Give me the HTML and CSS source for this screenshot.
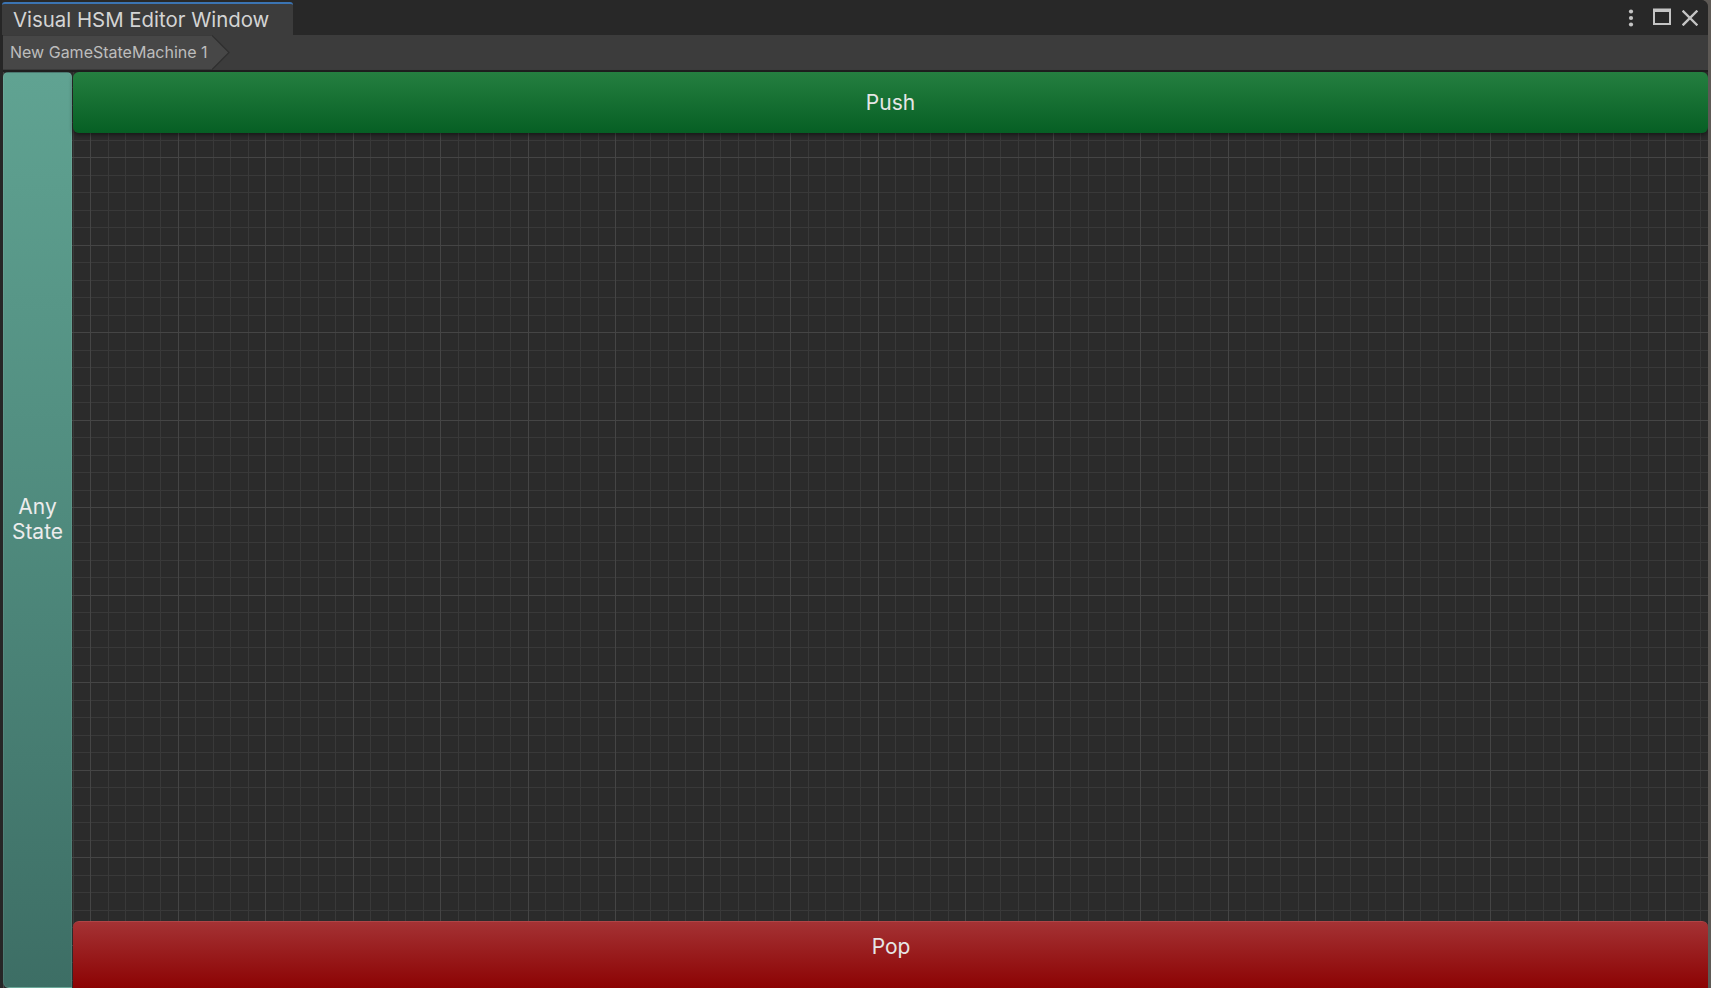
FILE: index.html
```html
<!DOCTYPE html>
<html>
<head>
<meta charset="utf-8">
<title>Visual HSM Editor Window</title>
<link rel="stylesheet" href="styles.css">
</head>
<body>
<div class="window">
  <div class="titlebar">
    <div class="tab">Visual HSM Editor Window</div>
    <div class="win-ctrls">
      <svg class="ic-dots" width="6" height="18" viewBox="0 0 6 18"><circle cx="3" cy="2.5" r="2.1" fill="#c4c4c4"/><circle cx="3" cy="9" r="2.1" fill="#c4c4c4"/><circle cx="3" cy="15.5" r="2.1" fill="#c4c4c4"/></svg>
      <svg class="ic-max" width="18" height="17" viewBox="0 0 18 17"><rect x="1" y="1.5" width="16" height="14.5" fill="none" stroke="#c4c4c4" stroke-width="2"/><rect x="1" y="1" width="16" height="3" fill="#c4c4c4"/></svg>
      <svg class="ic-close" width="16" height="16" viewBox="0 0 16 16"><path d="M1.5 1.5 L14.5 14.5 M14.5 1.5 L1.5 14.5" stroke="#c4c4c4" stroke-width="2.4" stroke-linecap="square"/></svg>
    </div>
  </div>
  <div class="breadcrumbs">
    <div class="crumb">
      <span class="crumb-label">New GameStateMachine 1</span>
      <svg class="crumb-tip" width="18" height="35" viewBox="0 0 18 35"><polygon points="0,0.5 17,17.5 0,34.5" fill="#474747"/><polyline points="0,0.5 17,17.5 0,34.5" fill="none" stroke="#2f2f2f" stroke-width="1.2"/></svg>
    </div>
  </div>
  <div class="sep"></div>
  <div class="content">
    <div class="any-state"><span>Any<br>State</span></div>
    <div class="graph">
      <div class="node push">Push</div>
      <div class="node pop">Pop</div>
    </div>
  </div>
</div>
</body>
</html>
```
FILE: styles.css
```css
* { box-sizing: border-box; }
html, body { margin: 0; padding: 0; }
body {
  width: 1711px;
  height: 988px;
  overflow: hidden;
  background: #5d5955;
  font-family: Inter, "Noto Sans", "Liberation Sans", sans-serif;
}
.window {
  width: 1708px;
  height: 988px;
  display: flex;
  flex-direction: column;
  overflow: hidden;
  background: #262626;
  padding-left: 3px;
  border-top-right-radius: 7px;
}
.titlebar {
  height: 35px;
  flex: none;
  display: flex;
  background: #282828;
  padding-top: 2px;
  margin-left: -1px;
}
.tab {
  width: 291px;
  height: 33px;
  background: #3c3c3c;
  border-top: 2px solid #3b74b3;
  border-radius: 3px 3px 0 0;
  color: #d4d4d4;
  font-size: 20.4px;
  line-height: 31px;
  padding-left: 11px;
  white-space: nowrap;
}
.win-ctrls {
  margin-left: auto;
  display: flex;
  align-items: flex-start;
  padding-top: 6px;
  padding-right: 10px;
}
.ic-dots { margin-top: 1px; }
.ic-max { margin-left: 19px; }
.ic-close { margin-left: 11px; margin-top: 2px; }
.breadcrumbs {
  height: 35px;
  flex: none;
  background: #3c3c3c;
  display: flex;
}
.crumb {
  display: flex;
  height: 35px;
}
.crumb-label {
  background: #474747;
  color: #bdbdbd;
  font-size: 16px;
  padding: 0 4px 0 7px;
  white-space: nowrap;
  border-top: 1px solid #3a3a3a;
  border-bottom: 1px solid #3a3a3a;
  line-height: 33px;
}
.crumb-tip { display: block; flex: none; }
.sep {
  height: 2px;
  flex: none;
  background: #1f1f1f;
}
.content {
  flex: 1;
  display: flex;
  min-height: 0;
  background-color: #2b2b2b;
  background-image:
    linear-gradient(to right, #454545 0 1px, transparent 1px 87px, #454545 87px 88px, transparent 88px),
    linear-gradient(to bottom, #454545 0 1px, transparent 1px 87px, #454545 87px 88px, transparent 88px),
    linear-gradient(to right, #393939 0 1px, transparent 1px 17px, #393939 17px 18px, transparent 18px),
    linear-gradient(to bottom, #393939 0 1px, transparent 1px 17px, #393939 17px 18px, transparent 18px);
  background-size: 175px 100%, 100% 175px, 35px 100%, 100% 35px;
  background-repeat: repeat-x, repeat-y, repeat-x, repeat-y;
  background-position: 0 0, 0 -2px, 0 0, 0 -2px;
}
.any-state {
  width: 69px;
  flex: none;
  border-radius: 5px 5px 0 6px;
  background: linear-gradient(to bottom, #60a392 0%, #4f8a7d 50%, #3d6e65 100%);
  border: 1px solid rgba(255,255,255,0.08);
  display: flex;
  align-items: center;
  justify-content: center;
  padding-bottom: 22px;
  color: #ececec;
  font-size: 21px;
  line-height: 25px;
  text-align: center;
}
.graph {
  flex: 1;
  display: flex;
  flex-direction: column;
  padding-left: 1px;
}
.node {
  display: flex;
  justify-content: center;
  color: #e6e6e6;
  font-size: 21px;
  line-height: 25px;
}
.push {
  height: 61px;
  align-items: center;
  border-radius: 6px;
  background: linear-gradient(to bottom, #257f40, #065f24);
  box-shadow: 0 2px 4px rgba(0,0,0,0.45);
}
.pop {
  margin-top: auto;
  height: 67px;
  padding-top: 12px;
  border-radius: 6px 6px 0 0;
  background: linear-gradient(to bottom, #a43234, #8c0303);
  border-top: 1px solid #b04446;
  padding-left: 1px;
}
```
